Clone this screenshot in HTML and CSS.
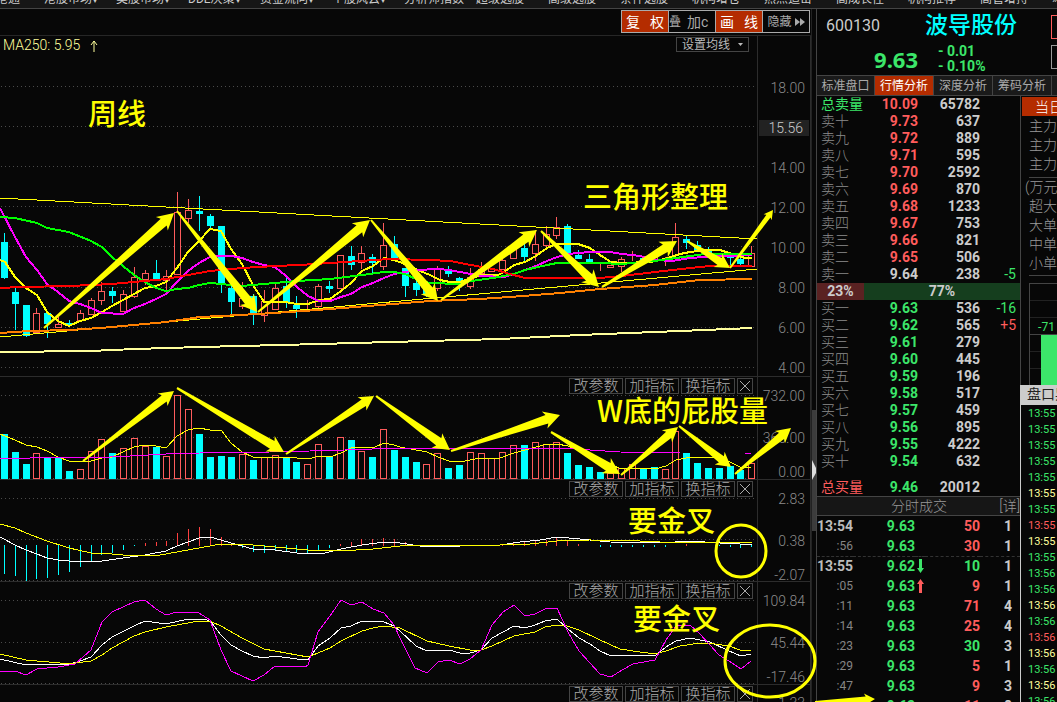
FILE: index.html
```html
<!DOCTYPE html>
<html lang="zh-CN">
<head>
<meta charset="utf-8">
<title>波导股份 600130 周线</title>
<link rel="stylesheet" href="styles.css">
</head>
<body>
<div class="app">
  <nav class="menu">
    <a href="#">沪深港通</a><a href="#">港股市场▾</a><a href="#">美股市场▾</a><a href="#">DDE决策▾</a><a href="#">资金流向▾</a><a href="#">个股风云▾</a><a href="#">分析师指数</a><a href="#">超级选股</a><a href="#">高级选股</a><a href="#">条件选股</a><a href="#">机构增仓</a><a href="#">热点追击</a><a href="#">高成长性</a><a href="#">机构推荐</a><a href="#">高管增持</a><a href="#">»</a>
  </nav>
  <main class="workspace">
    <section class="charts">
      <div class="toolbar">
        <button class="tool tool-on"><span>复</span><span>权</span></button>
        <button class="tool tool-stack"><small>叠</small> 加c</button>
        <button class="tool tool-on"><span>画</span><span>线</span></button>
        <button class="tool tool-hide">隐藏<svg class="ff" viewBox="0 0 10 8"><path d="M0 0L5 4L0 8zM5 0L10 4L5 8z"/></svg></button>
      </div>
      <div class="panel panel-price">
        <div class="plot"><svg class="draw"><g id="price" transform="translate(0,-36)"></g></svg></div>
        <div class="axis axis-price"><span>18.00</span><span class="marker">15.56</span><span>14.00</span><span>12.00</span><span>10.00</span><span>8.00</span><span>6.00</span><span>4.00</span></div>
        <div class="legend">MA250: 5.95 &nbsp;<svg class="up" viewBox="0 0 8 12"><path d="M4 12V1M1 5L4 1L7 5"/></svg></div>
        <button class="ma-set">设置均线<svg class="caret" viewBox="0 0 5 3"><path d="M0 0H5L2.500 3z"/></svg></button>
      </div>
      <div class="panel panel-volume">
        <div class="plot"><svg class="draw"><g id="volume" transform="translate(0,-377)"></g></svg></div>
        <div class="axis"><span>732.00</span><span>366.00</span><span>0.00</span></div>
        <div class="tools"><button>改参数</button><button>加指标</button><button>换指标</button><button class="close" aria-label="关闭"><svg viewBox="0 0 10 10"><path d="M0 0L10 10M10 0L0 10"/></svg></button></div>
      </div>
      <div class="panel panel-macd">
        <div class="plot"><svg class="draw"><g id="macd" transform="translate(0,-480)"></g></svg></div>
        <div class="axis"><span>2.83</span><span>0.38</span><span>-2.07</span></div>
        <div class="tools"><button>改参数</button><button>加指标</button><button>换指标</button><button class="close" aria-label="关闭"><svg viewBox="0 0 10 10"><path d="M0 0L10 10M10 0L0 10"/></svg></button></div>
      </div>
      <div class="panel panel-kdj">
        <div class="plot"><svg class="draw"><g id="kdj" transform="translate(0,-582)"></g></svg></div>
        <div class="axis"><span>109.84</span><span>45.44</span><span>-17.46</span></div>
        <div class="tools"><button>改参数</button><button>加指标</button><button>换指标</button><button class="close" aria-label="关闭"><svg viewBox="0 0 10 10"><path d="M0 0L10 10M10 0L0 10"/></svg></button></div>
      </div>
      <div class="panel panel-last">
        <div class="plot"></div>
        <div class="axis"><span>-1.33</span></div>
        <div class="tools"><button>改参数</button><button>加指标</button><button>换指标</button><button class="close" aria-label="关闭"><svg viewBox="0 0 10 10"><path d="M0 0L10 10M10 0L0 10"/></svg></button></div>
      </div>
    </section>
    <div class="splitter"><div class="thumb"><svg viewBox="0 0 5 20"><path d="M0 0L4 8V13L0 20z"/></svg></div></div>
    <aside class="quote">
      <header class="quote-head">
        <span class="code">600130</span>
        <span class="name">波导股份</span>
        <span class="price">9.63</span>
        <span class="change">- 0.01<br>- 0.10%</span>
        <button class="edge edge-red" aria-label="买入"></button>
        <button class="edge" aria-label="卖出"></button>
      </header>
      <div class="tabs"><button>标准盘口</button><button class="active">行情分析</button><button>深度分析</button><button>筹码分析</button><button aria-label="更多"></button></div>
      <div class="quote-body">
        <div class="book">
          <table class="ladder">
            <tr class="up-row"><th class="green">总卖量</th><td>10.09</td><td>65782</td><td></td></tr>
            <tr class="up-row"><th>卖十</th><td>9.73</td><td>637</td><td></td></tr>
            <tr class="up-row"><th>卖九</th><td>9.72</td><td>889</td><td></td></tr>
            <tr class="up-row"><th>卖八</th><td>9.71</td><td>595</td><td></td></tr>
            <tr class="up-row"><th>卖七</th><td>9.70</td><td>2592</td><td></td></tr>
            <tr class="up-row"><th>卖六</th><td>9.69</td><td>870</td><td></td></tr>
            <tr class="up-row"><th>卖五</th><td>9.68</td><td>1233</td><td></td></tr>
            <tr class="up-row"><th>卖四</th><td>9.67</td><td>753</td><td></td></tr>
            <tr class="up-row"><th>卖三</th><td>9.66</td><td>821</td><td></td></tr>
            <tr class="up-row"><th>卖二</th><td>9.65</td><td>506</td><td></td></tr>
            <tr><th>卖一</th><td>9.64</td><td>238</td><td class="green">-5</td></tr>
          </table>
          <div class="ratio"><span class="ratio-sell">23%</span><span class="ratio-buy">77%</span></div>
          <table class="ladder">
            <tr class="down-row"><th>买一</th><td>9.63</td><td>536</td><td class="green">-16</td></tr>
            <tr class="down-row"><th>买二</th><td>9.62</td><td>565</td><td class="red">+5</td></tr>
            <tr class="down-row"><th>买三</th><td>9.61</td><td>279</td><td></td></tr>
            <tr class="down-row"><th>买四</th><td>9.60</td><td>445</td><td></td></tr>
            <tr class="down-row"><th>买五</th><td>9.59</td><td>196</td><td></td></tr>
            <tr class="down-row"><th>买六</th><td>9.58</td><td>517</td><td></td></tr>
            <tr class="down-row"><th>买七</th><td>9.57</td><td>459</td><td></td></tr>
            <tr class="down-row"><th>买八</th><td>9.56</td><td>895</td><td></td></tr>
            <tr class="down-row"><th>买九</th><td>9.55</td><td>4222</td><td></td></tr>
            <tr class="down-row"><th>买十</th><td>9.54</td><td>632</td><td></td></tr>
            <tr class="down-row total"><th class="red">总买量</th><td>9.46</td><td>20012</td><td></td></tr>
          </table>
          <div class="deals-head"><span>分时成交</span><a href="#">[详]</a></div>
          <table class="deals">
            <tr><th>13:54</th><td>9.63</td><td></td><td class="red">50</td><td>1</td></tr>
            <tr class="minute-end"><th class="sec">:56</th><td>9.63</td><td></td><td class="red">30</td><td>1</td></tr>
            <tr><th>13:55</th><td>9.62</td><td><svg class="tick tick-down" viewBox="0 0 7 14"><path d="M2 0H5V9H7L3.500 14L0 9H2z"/></svg></td><td class="green">10</td><td>1</td></tr>
            <tr><th class="sec">:05</th><td>9.63</td><td><svg class="tick tick-up" viewBox="0 0 7 14"><path d="M2 14H5V5H7L3.500 0L0 5H2z"/></svg></td><td class="red">9</td><td>1</td></tr>
            <tr><th class="sec">:11</th><td>9.63</td><td></td><td class="red">71</td><td>4</td></tr>
            <tr><th class="sec">:14</th><td>9.63</td><td></td><td class="red">25</td><td>4</td></tr>
            <tr><th class="sec">:23</th><td>9.63</td><td></td><td class="green">30</td><td>3</td></tr>
            <tr><th class="sec">:29</th><td>9.63</td><td></td><td class="red">5</td><td>1</td></tr>
            <tr><th class="sec">:47</th><td>9.63</td><td></td><td class="red">9</td><td>3</td></tr>
            <tr><th class="sec"></th><td>9.63</td><td></td><td class="red">11</td><td>8</td></tr>
          </table>
        </div>
        <div class="flow">
          <div class="flow-top">
            <button class="flow-tab">当日</button>
            <ul class="flow-list"><li>主力</li><li>主力</li><li>主力</li></ul>
            <ul class="flow-list flow-size"><li class="unit">(万元)</li><li>超大</li><li>大单</li><li>中单</li><li>小单</li></ul>
            <div class="flow-chart"><span>-71</span><div class="flow-base"><div class="flow-bar"></div></div></div>
          </div>
          <div class="alerts">
            <h2>盘口异动</h2>
            <ol>
              <li>13:55</li><li>13:55</li><li>13:55</li><li>13:55</li><li>13:55</li><li class="pale">13:55</li><li>13:55</li><li class="red">13:55</li><li class="pale">13:55</li><li>13:55</li><li>13:56</li><li>13:56</li><li class="pale">13:56</li><li>13:56</li><li class="red">13:56</li><li class="pale">13:56</li><li>13:56</li><li class="pale">13:56</li><li>13:56</li>
            </ol>
          </div>
        </div>
      </div>
    </aside>
  </main>
  <svg class="notes">
    <g id="arrows"></g>
    <ellipse cx="741" cy="551" rx="25" ry="26"/>
    <ellipse cx="770" cy="661" rx="45" ry="36"/>
    <text x="88" y="125">周线</text>
    <text x="583" y="208">三角形整理</text>
    <text x="597" y="422">W底的屁股量</text>
    <text x="628" y="532">要金叉</text>
    <text x="633" y="630">要金叉</text>
  </svg>
</div>
<script src="chart.js"></script>
</body>
</html>
```

FILE: styles.css
```css
* { box-sizing: border-box; }
body {
  margin: 0;
  background: #070707;
  color: #ccc;
  font: 14px/16px Roboto, "Noto Sans CJK SC", sans-serif;
  overflow: hidden;
}
button {
  margin: 0;
  padding: 0;
  border: 0;
  background: none;
  color: inherit;
  font: inherit;
  white-space: nowrap;
}
a { color: inherit; text-decoration: none; }
ul, ol { list-style: none; margin: 0; padding: 0; }
table { border-collapse: collapse; table-layout: fixed; width: 100%; }
th, td { padding: 0; white-space: nowrap; }
.green { color: #3ce66a; }
.red { color: #ff5c5c; }

.app { position: relative; display: flex; flex-direction: column; height: 100vh; overflow: hidden; }
.menu {
  display: flex;
  align-items: flex-end;
  flex: none;
  height: 9px;
  padding-bottom: 1px;
  margin-left: -28px;
  background: #161616;
  border-bottom: 1px solid #444;
  overflow: hidden;
  font-size: 12px;
}
.menu a { flex: none; width: 72px; white-space: nowrap; }
.workspace {
  flex: 1;
  min-height: 0;
  display: grid;
  grid-template-columns: minmax(0, 1fr) 5px 241px;
}

.charts { display: flex; flex-direction: column; min-height: 0; overflow: hidden; }
.toolbar {
  display: flex;
  justify-content: flex-end;
  flex: none;
  height: 27px;
  padding: 1px 1px 2px 0;
  border-bottom: 1px solid #262626;
}
.tool { width: 48px; border: 1px solid #aaa; margin-left: -1px; font-size: 14px; color: #aaa; overflow: hidden; }
.tool-on { display: flex; justify-content: space-between; align-items: center; padding: 0 4px; background: #b42c00; color: #fff; }
.tool-stack { display: flex; align-items: center; gap: 6px; }
.tool-stack small { font-size: 12px; }
.tool-hide { font-size: 12px; }
.ff { width: 10px; height: 8px; margin-left: 3px; fill: #aaa; }

.panel {
  position: relative;
  flex: none;
  display: grid;
  grid-template-columns: minmax(0, 1fr) 54px;
  border-bottom: 1px solid #2c2c2c;
}
.panel-price { height: 341px; }
.panel-volume { height: 103px; }
.panel-macd { height: 102px; }
.panel-kdj { height: 103px; }
.panel-last { height: 103px; }
.draw { display: block; width: 100%; height: 100%; overflow: hidden; shape-rendering: crispEdges; }
.axis {
  display: grid;
  grid-template-rows: 42px 34px 16px;
  align-content: start;
  justify-items: stretch;
  padding-top: 11px;
  border: solid #2c2c2c;
  border-width: 0 1px;
  color: #8c8c8c;
  font-size: 14px;
  font-weight: 300;
  text-align: right;
  line-height: 16px;
}
.axis span { padding-right: 5px; height: 16px; }
.panel-last .axis { padding-top: 10px; }
.axis-price { padding-top: 44px; grid-template-rows: repeat(8, 40px); }
.axis .marker { margin: 0 1px; padding-right: 6px; background: #222; color: #ccc; }
.legend { position: absolute; left: 3px; top: 1px; color: #ffff9c; font-size: 14px; font-weight: 300; }
.up { width: 8px; height: 12px; margin-left: 3px; vertical-align: -2px; fill: none; stroke: #ffff9c; }
.ma-set { position: absolute; right: 62px; top: 1px; width: 73px; height: 15px; border: 1px solid #444; color: #bbb; font-size: 12px; line-height: 12px; }
.caret { width: 5px; height: 3px; margin-left: 8px; vertical-align: 3px; fill: #bbb; }
.tools { position: absolute; right: 58px; top: 1px; display: flex; gap: 2px; }
.tools button { width: 54px; height: 16px; border: 1px solid #444; color: #aaa; font-size: 15px; font-weight: 300; line-height: 14px; }
.tools .close { width: 16px; display: grid; place-items: center; }
.close svg { width: 10px; height: 10px; stroke: #aaa; fill: none; }

.splitter { border-left: 1px solid #222; padding-top: 401px; }
.thumb { height: 121px; background: #3c3c3c; padding-top: 50px; }
.thumb svg { display: block; width: 5px; height: 20px; fill: #ddd; }

.quote { border-left: 1px solid #444; display: flex; flex-direction: column; min-height: 0; overflow: hidden; }
.quote-head {
  flex: none;
  display: grid;
  grid-template-columns: 113px 113px 20px;
  grid-template-rows: 34px 32px;
  height: 66px;
}
.code { padding: 9px 0 0 9px; font-size: 16px; color: #ccc; }
.name { padding-top: 6px; margin-left: -5px; color: #0ff; font-size: 23px; font-weight: 500; line-height: 22px; white-space: nowrap; }
.price { grid-area: 2 / 1; padding: 5px 12px 0 0; color: #3ce66a; font: bold 22px/22px "Noto Sans", sans-serif; text-align: right; }
.change { grid-area: 2 / 2; padding: 1px 0 0 8px; color: #3ce66a; font-weight: bold; line-height: 15px; }
.edge { grid-area: 2 / 3; align-self: start; justify-self: end; margin: 2px 0 0; width: 12px; height: 24px; border: 1px solid #999; }
.edge-red { grid-area: 1 / 3; margin-top: 6px; border-color: #ff5c5c; }
.tabs { flex: none; display: flex; height: 21px; border: solid #444; border-width: 1px 0; background: #1a1a1a; font-size: 12px; color: #aaa; }
.tabs button { flex: none; width: 59px; border-right: 1px solid #444; }
.tabs button:first-child { width: 58px; }
.tabs .active { background: #b42c00; color: #fff; }

.quote-body { flex: 1; min-height: 0; display: grid; grid-template-columns: 203px minmax(0, 1fr); }
.book { min-width: 0; overflow: hidden; }
.ladder tr { height: 17px; }
.ladder th { width: 48px; padding-left: 4px; font-weight: 300; text-align: left; color: #8c8c8c; line-height: 17px; }
.ladder th.green { color: #3ce66a; font-weight: 400; }
.ladder th.red { color: #ff5c5c; font-weight: 400; }
.ladder td { text-align: right; font-weight: bold; line-height: 17px; }
.ladder td:nth-child(2) { width: 53px; }
.ladder td:nth-child(3) { width: 62px; }
.ladder td:nth-child(4) { padding-right: 4px; font-weight: 400; }
.up-row td:nth-child(2) { color: #ff5c5c; }
.down-row td:nth-child(2) { color: #3ce66a; }
.ladder .total th, .ladder .total td { height: 26px; padding-top: 8px; }
.ratio { display: flex; height: 17px; font-weight: bold; line-height: 17px; text-align: center; }
.ratio-sell { width: 23%; background: #5a2222; }
.ratio-buy { flex: 1; background: #153e1e; }
.deals-head {
  display: flex;
  justify-content: space-between;
  height: 20px;
  padding-left: 74px;
  border: solid #444;
  border-width: 1px 0;
  background: #161616;
  color: #999;
  font-weight: 300;
  line-height: 18px;
}
.deals tr { height: 20px; }
.deals th { width: 36px; text-align: right; color: #bbb; }
.deals .sec { font-size: 12px; font-weight: 400; color: #858585; }
.deals td { text-align: right; font-weight: bold; line-height: 18px; }
.deals td:nth-child(2) { width: 62px; color: #3ce66a; }
.deals td:nth-child(3) { width: 10px; }
.deals td:nth-child(4) { width: 55px; }
.deals td:nth-child(5) { padding-right: 8px; }
.minute-end { border-bottom: 1px dashed #333; }
.tick { display: block; width: 7px; height: 14px; margin-left: 2px; }
.tick-down { fill: #3ce66a; }
.tick-up { fill: #ff5c5c; }

.flow { display: flex; flex-direction: column; min-width: 0; overflow: hidden; }
.flow-top { flex: none; height: 289px; padding-top: 1px; border-left: 1px solid #444; color: #999; font-weight: 300; white-space: nowrap; }
.flow-tab { display: block; width: 100%; height: 19px; padding-left: 13px; margin-left: 1px; background: #b42c00; color: #fff; text-align: left; }
.flow-list { margin-left: 8px; padding: 1px 0 3px; border-bottom: 1px solid #444; line-height: 19px; }
.flow-size { padding: 0 0 2px; }
.flow-size .unit { margin-left: -4px; }
.flow-chart {
  margin: 7px 0 0 8px;
  height: 104px;
  border: 1px solid #444;
  border-right: 0;
  padding-top: 35px;
  background: repeating-linear-gradient(#0000 0 16px, #222 16px 17px);
  color: #3ce66a;
  font-size: 12px;
  text-align: center;
}
.flow-chart span { display: block; height: 15px; padding-left: 6px; font-weight: 400; }
.flow-base { border-top: 1px solid #444; padding-left: 11px; }
.flow-bar { height: 51px; background: #3ce66a; }
.alerts { flex: 1; min-height: 0; border-left: 1px solid #ccc; color: #3ce66a; }
.alerts h2 { margin: 0 0 1px; height: 20px; padding-left: 6px; background: #ccc; color: #222; font-size: 14px; font-weight: 400; line-height: 19px; white-space: nowrap; overflow: hidden; }
.alerts li { padding-left: 7px; font-size: 11px; line-height: 16px; }
.alerts .pale { color: #ffff9c; }

.notes { position: absolute; inset: 0; width: 100%; height: 100%; pointer-events: none; fill: #ff0; }
.notes ellipse { fill: none; stroke: #ff0; stroke-width: 3; }
.notes text { font: 500 29px "Noto Sans CJK SC", sans-serif; }
```

FILE: chart.js
```js
const NS = "http://www.w3.org/2000/svg";
const CYAN = "#00ffff", RED = "#ff5c5c", BG = "#070707";
const STEP = 10.83;
const xAt = i => Math.round(4 + i * STEP);

function add(id, tag, attrs) {
  const el = document.createElementNS(NS, tag);
  for (const k in attrs) el.setAttribute(k, attrs[k]);
  document.getElementById(id).appendChild(el);
}
function grid(id, ys) {
  ys.forEach(y => add(id, "path", { d: `M1 ${y + .5}H757`, stroke: "#4a4a4a", "stroke-dasharray": "1 3" }));
}
function line(id, pts, stroke, width) {
  add(id, "polyline", { points: pts, fill: "none", stroke, "stroke-width": width });
}
function bar(id, x, top, bottom, up) {
  if (up) add(id, "rect", { x: x - 2.5, y: top + .5, width: 6, height: Math.max(bottom - top - 1, 0), fill: BG, stroke: RED });
  else add(id, "rect", { x: x - 3, y: top, width: 7, height: Math.max(bottom - top, 1), fill: CYAN });
}

// body top, body bottom, high, low, rising
const candles = [
  [242,278,233,279,0],[292,304,286,330,0],[305,336,305,337,0],[313,333,308,333,1],[313,324,313,338,0],
  [324,328,317,328,1],[323,325,320,327,0],[313,321,310,321,1],[300,315,298,315,1],[291,301,282,305,1],
  [291,296,287,303,0],[294,312,290,312,1],[277,297,267,298,1],[273,280,270,285,1],[273,280,260,280,0],
  [276,281,270,290,1],[212,275,192,275,1],[210,219,199,223,1],[211,214,196,231,0],[216,226,214,228,0],
  [226,283,226,293,0],[288,302,286,314,0],[298,307,282,309,1],[296,313,294,325,0],[301,316,290,322,1],
  [288,310,284,310,1],[286,302,278,308,0],[305,309,296,318,0],[308,309,300,310,1],[286,307,284,308,1],
  [286,289,281,293,0],[255,289,255,289,1],[256,265,246,270,0],[253,263,246,269,1],[257,263,254,273,0],
  [245,267,223,270,1],[244,261,236,261,0],[268,286,268,297,0],[283,290,280,296,0],[289,295,286,297,0],
  [269,289,266,291,1],[269,274,266,277,0],[278,281,277,291,0],[277,287,268,289,1],[269,274,262,275,1],
  [268,272,268,272,1],[260,270,257,270,1],[247,259,247,259,1],[248,257,243,262,0],[244,254,230,261,1],
  [234,246,226,249,1],[227,236,217,239,1],[226,253,224,253,0],[255,259,250,259,0],[259,262,254,263,0],
  [267,268,262,271,1],[265,268,265,268,1],[259,267,257,272,1],[258,259,251,261,1],[258,261,258,261,0],
  [257,260,256,261,1],[259,261,257,266,1],[237,256,223,256,1],[239,243,236,249,0],[245,250,241,250,0],
  [251,254,247,254,0],[254,257,254,258,0],[257,258,256,266,0],[259,264,258,265,0],[253,267,246,267,1]
];
grid("price", [86, 126, 166, 206, 246, 287, 327, 367]);
candles.forEach(([t, b, h, l, up], i) => {
  const x = xAt(i);
  add("price", "path", { d: `M${x + .5} ${h}V${l}`, stroke: up ? RED : CYAN });
  bar("price", x, t, b, up);
});
line("price", "0,352 90,351 135,349 200,347 320,344 390,342 500,339 580,335 680,331 752,328", "#ffff9c", 2);
line("price", "0,198 757,239", "#ffff00", 1);
line("price", "0,337 757,269", "#ffff00", 1);
line("price", "0,260 5,262 15,277 26,288 37,295 47,312 58,321 69,326 80,321 91,318 102,312 112,306 123,300 145,288 156,286 166,282 177,268 188,252 199,241 210,229 221,231 231,249 242,264 253,285 264,302 285,302 297,304 308,304 319,300 330,299 341,291 351,283 362,271 373,266 384,258 394,260 405,264 420,271 430,275 440,280 450,282 460,282 471,278 482,275 498,275 504,272 514,265 525,262 536,256 547,248 556,244 578,244 590,248 600,255 611,262 622,263 650,262 665,259 680,254 690,252 705,250 720,250 732,254 745,258 752,258", "#ffff00", 2);
line("price", "0,208 15,237 26,257 37,270 47,284 58,292 69,301 80,304 91,308 102,313 123,314 134,308 145,304 156,299 166,294 177,282 188,271 199,263 210,257 221,256 232,256 242,258 253,262 264,265 275,267 286,276 297,287 308,296 319,301 330,301 341,297 351,294 362,287 373,283 384,278 394,274 405,272 416,270 438,269 449,270 460,272 471,274 482,276 504,277 514,274 525,270 536,266 547,261 557,257 568,254 590,252 610,252 622,254 640,256 655,260 672,261 690,258 705,257 752,255", "#ff00ff", 2);
line("price", "0,217 15,218 37,223 47,228 69,232 91,241 102,247 112,257 123,266 134,275 145,282 156,288 166,291 177,289 188,288 199,285 210,283 221,284 242,286 275,283 297,281 330,279 362,275 384,272 394,272 405,274 416,279 430,283 460,284 471,281 493,278 514,274 525,270 547,265 557,263 600,263 622,264 655,261 690,256 705,254 752,254", "#00ff00", 2);
line("price", "0,288 20,287 70,286 112,284 134,282 166,279 188,275 210,271 242,268 275,266 300,265 330,263 360,261 390,259 430,260 450,261 471,265 493,269 510,274 525,278 600,278 622,276 655,272 690,268 710,266 752,266", "#ff0000", 2);
line("price", "0,333 30,331 70,330 100,328 134,325 166,322 200,317 240,315 290,312 330,309 380,305 430,301 480,299 510,297 560,293 600,289 655,285 700,280 752,279", "#ff8000", 2);

// top of each column; rising weeks are hollow like the candles above
const volumes = [434,452,464,453,457,457,471,469,451,439,453,448,438,446,447,456,395,409,434,457,456,457,454,460,457,455,457,462,464,444,456,437,440,451,457,429,450,457,462,464,453,468,465,452,453,458,452,445,445,442,444,442,453,465,467,472,473,468,464,468,467,469,431,453,463,468,468,466,470,463];
const falling = new Set([0,1,2,4,5,6,10,14,18,19,20,21,23,26,27,30,32,34,36,37,38,41,42,48,52,53,54,55,59,60,63,64,65,66,67,68]);
grid("volume", [395, 437, 478]);
volumes.forEach((top, i) => bar("volume", xAt(i), top, 479, !falling.has(i)));
line("volume", "0,434 15,440 26,445 37,447 47,451 58,457 69,461 80,462 91,461 102,458 112,457 123,452 134,447 145,445 156,446 166,448 177,436 188,430 199,428 210,430 221,430 231,443 242,452 253,457 286,457 297,458 308,459 319,456 330,457 341,453 351,448 362,447 373,448 384,443 394,445 400,447 427,452 438,457 449,461 460,462 480,458 500,458 514,453 525,450 536,447 547,444 557,444 568,446 590,455 600,460 611,465 622,469 640,468 655,469 666,466 676,460 686,458 700,457 720,457 730,462 740,467 751,467", "#ffff00", 1);
line("volume", "0,458 30,458 60,457 90,458 130,456 166,454 200,453 270,452 310,451 345,450 400,448 560,448 590,450 620,452 680,453 745,453 751,454", "#ff00ff", 1);

const ZERO = 545;
const macd = [574,576,581,579,578,575,572,567,561,555,553,550,546,543,542,541,533,529,527,529,537,543,548,552,553,551,551,553,553,551,548,544,542,539,539,538,539,542,545,546,546,546,546,546,545,545,544,542,541,540,540,538,541,544,545,547,547,547,547,547,547,547,545,544,545,545,546,547,548,547];
grid("macd", [498, 539, 580]);
macd.forEach((v, i) => {
  if (v === ZERO) return;
  add("macd", "path", { d: `M${xAt(i) + .5} ${v < ZERO ? ZERO + 1 : ZERO}V${v}`, stroke: v < ZERO ? "#ff4040" : CYAN });
});
line("macd", "0,537 15,545 26,550 37,554 47,558 58,560 80,562 102,561 123,558 145,555 166,551 177,546 188,542 199,538 210,537 221,540 231,543 242,546 253,549 275,550 297,553 325,553 341,549 362,545 384,542 400,543 420,546 460,546 500,545 520,542 540,540 557,537 580,539 610,542 660,543 690,541 720,543 740,544 752,544", "#ffffff", 1);
line("macd", "0,524 15,528 26,533 47,541 69,548 91,553 112,554 134,556 160,555 177,552 199,548 221,544 242,544 264,546 286,548 308,550 340,551 373,549 400,546 420,545 500,545 530,544 557,541 590,540 640,541 680,543 720,542 752,543", "#ffff00", 1);

grid("kdj", [600, 642, 683]);
line("kdj", "0,659 26,665 70,664 80,661 91,657 102,645 112,637 134,626 145,621 166,624 188,619 205,619 212,623 221,635 231,645 242,651 253,656 264,658 275,656 297,659 308,660 318,646 330,638 341,628 351,626 362,621 384,622 394,626 400,631 416,646 427,651 449,650 460,653 470,653 481,650 492,638 514,626 525,628 535,625 545,621 557,619 568,629 579,638 590,644 600,651 611,656 640,655 655,656 666,647 676,641 690,638 710,642 729,651 741,656 751,654", "#ffffff", 1);
line("kdj", "0,654 26,660 60,663 75,663 91,661 102,655 112,648 134,636 145,632 166,627 199,621 212,622 221,626 242,638 264,649 286,653 308,657 318,653 330,648 341,641 362,631 373,628 384,626 400,628 427,641 449,646 470,650 481,650 492,646 514,636 535,632 545,627 557,625 567,626 579,630 600,640 620,649 640,652 655,654 666,651 680,646 700,643 715,644 729,646 740,650 751,651", "#ffff00", 1);
line("kdj", "0,672 15,671 26,675 37,669 58,667 75,664 91,650 102,622 112,612 123,607 134,602 145,600 156,609 166,615 177,612 199,613 210,620 221,650 231,671 242,676 253,681 264,675 275,666 305,667 308,665 318,632 330,616 341,600 351,605 362,602 373,609 384,613 394,625 400,638 415,668 427,673 438,662 449,660 460,664 470,659 481,650 492,625 503,612 514,605 525,616 535,614 545,609 557,608 568,632 579,651 590,663 600,674 611,677 622,670 633,664 655,660 666,640 676,626 690,625 700,634 719,655 729,661 741,669 751,661", "#ff00ff", 1);

// hand-drawn trend arrows: a shaft that widens towards the head
function arrow(x1, y1, x2, y2, w) {
  const len = Math.hypot(x2 - x1, y2 - y1), ux = (x2 - x1) / len, uy = (y2 - y1) / len;
  const head = w * 1.8, at = (d, s) => `${(x1 + ux * d - uy * s).toFixed(1)},${(y1 + uy * d + ux * s).toFixed(1)}`;
  add("arrows", "polygon", { points: [
    at(0, 1), at(len - head * .85, w / 2), at(len - head, w), at(len, 0),
    at(len - head, -w), at(len - head * .85, -w / 2), at(0, -1)].join(" ") });
}
[
  [44,328,174,213,9],[177,211,257,312,9],[258,312,370,220,9],[371,220,438,301,9],[441,300,537,230,9],
  [541,231,599,287,9],[602,287,677,241,9],[687,241,730,268,8],[730,268,773,210,5],
  [83,461,174,391,8],[177,388,284,452,9],[286,454,374,396,8],[376,396,450,450,9],[451,451,560,415,9],
  [551,432,620,474,9],[621,475,678,427,8],[679,426,731,467,8],[735,474,791,428,8],[815,702,875,699,6]
].forEach(a => arrow(...a));
```
